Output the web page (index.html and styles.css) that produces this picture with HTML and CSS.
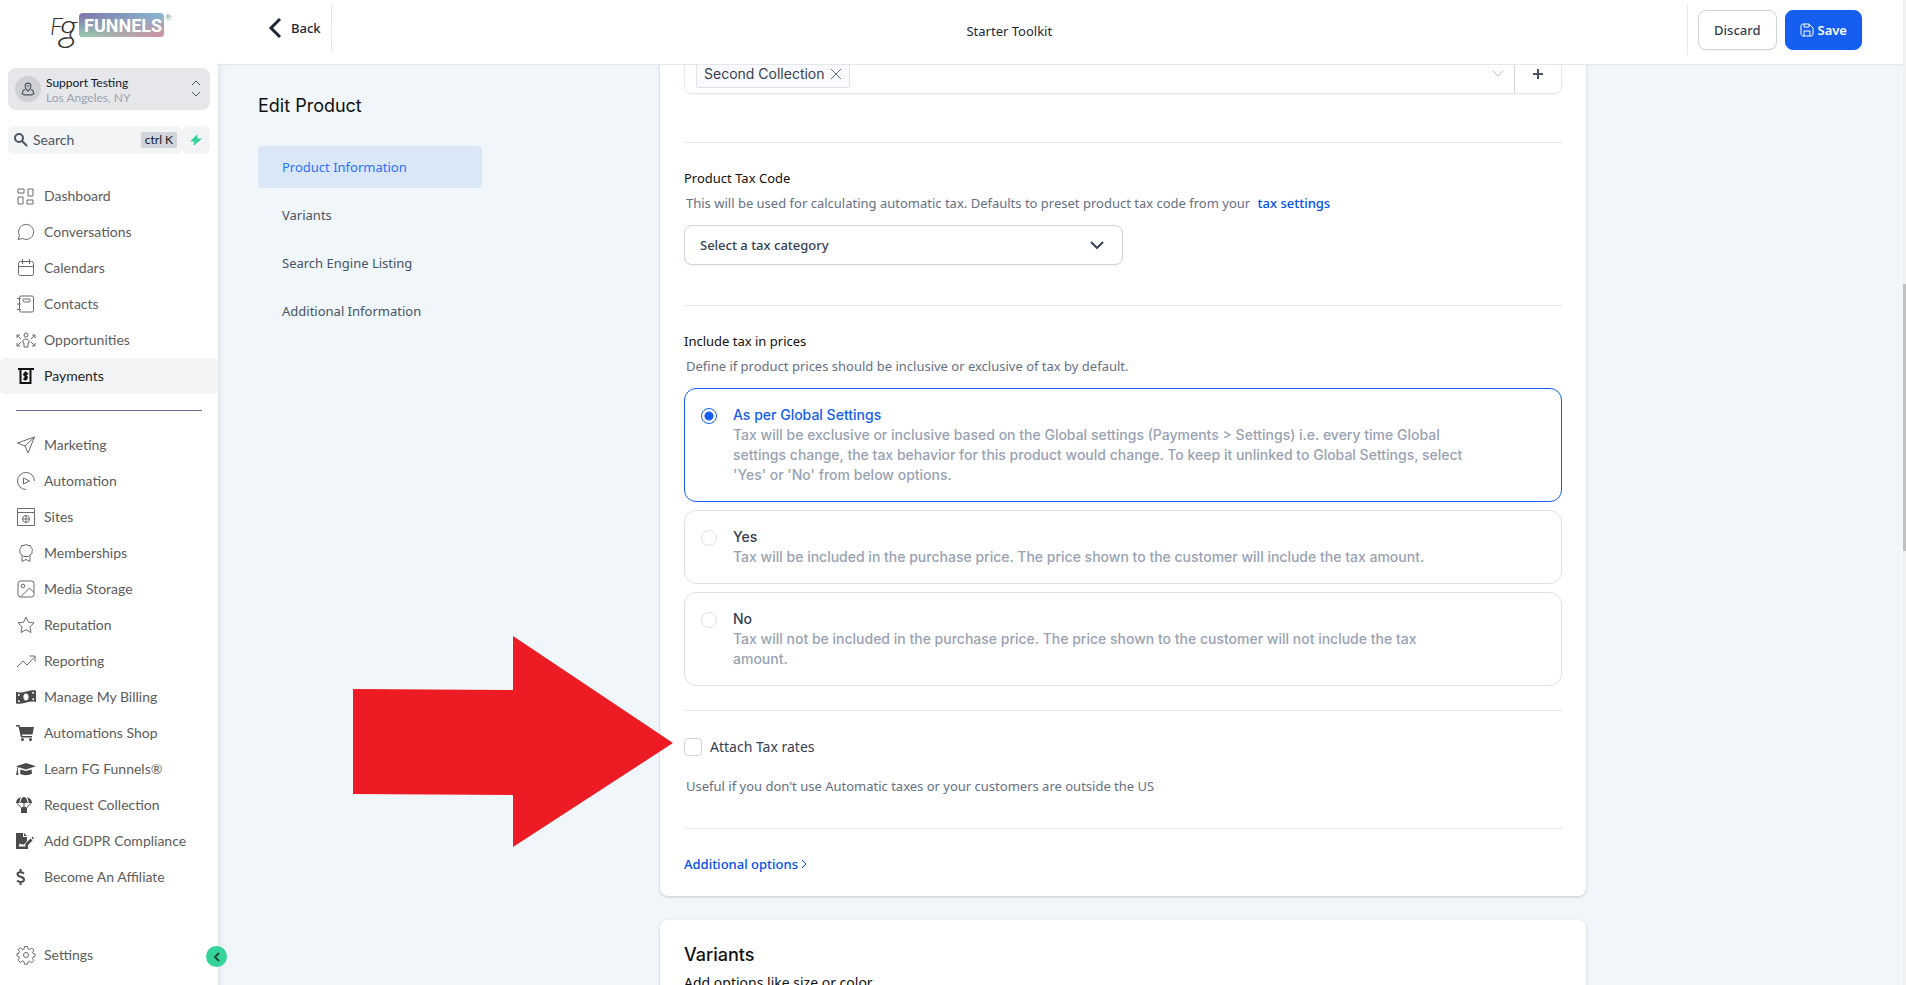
FILE: index.html
```html
<!DOCTYPE html>
<html lang="en">
<head>
    <meta charset="UTF-8">
    <meta name="viewport" content="width=device-width, initial-scale=1.0">
    <title>Starter Toolkit - Edit Product</title>
    <link rel="stylesheet" href="styles.css">
</head>
<body>
    <!-- Sidebar -->
    <aside class="sidebar">
        <a class="logo" href="#" aria-label="FG Funnels">
            <svg width="126" height="44" viewBox="0 0 126 44">
                <defs>
                    <linearGradient id="logoTop" x1="0" y1="0" x2="1" y2="0">
                        <stop offset="0" stop-color="#7f76ad"/>
                        <stop offset="1" stop-color="#86b9d0"/>
                    </linearGradient>
                    <linearGradient id="logoBottom" x1="0" y1="0" x2="1" y2="0">
                        <stop offset="0" stop-color="#93cfae"/>
                        <stop offset="1" stop-color="#d58c9f"/>
                    </linearGradient>
                    <linearGradient id="logoFade" x1="0" y1="0" x2="0" y2="1">
                        <stop offset="0.1" stop-color="#000"/>
                        <stop offset="1" stop-color="#fff"/>
                    </linearGradient>
                    <mask id="logoMask"><rect x="31" y="3" width="85" height="24" fill="url(#logoFade)"/></mask>
                </defs>
                <rect x="31" y="3" width="85" height="24" rx="4" fill="url(#logoTop)"/>
                <rect x="31" y="3" width="85" height="24" rx="4" fill="url(#logoBottom)" mask="url(#logoMask)"/>
                <text class="logo-script" x="2" y="25" font-size="24">F</text>
                <text class="logo-script" x="11" y="31" font-size="40">g</text>
                <text class="logo-word" x="36" y="22">FUNNELS</text>
                <text class="logo-mark" x="117" y="10">®</text>
            </svg>
        </a>

        <button class="location" type="button">
            <span class="location-avatar">
                <svg class="icon" width="14" height="14" viewBox="0 0 24 24"><path stroke-width="2" d="M12 16s-5-4.500-5-9a5 5 0 0 1 10 0c0 4.500-5 9-5 9z"/><circle cx="12" cy="7" r="1.500"/><path stroke-width="2" d="M7 13l-3 1-2 6 4 2h12l4-2-2-6-3-1"/></svg>
            </span>
            <span class="location-text">
                <span class="location-name">Support Testing</span>
                <span class="location-city">Los Angeles, NY</span>
            </span>
            <svg class="icon" width="10" height="18" viewBox="0 0 10 18"><path d="M1 5l4-4 4 4M1 12l4 4 4-4"/></svg>
        </button>

        <div class="search-row">
            <label class="search">
                <svg class="icon search-icon" width="14" height="14" viewBox="0 0 14 14"><circle cx="5" cy="5" r="4"/><path d="M8 8l5 5"/></svg>
                <input type="text" placeholder="Search" aria-label="Search">
                <kbd>ctrl K</kbd>
            </label>
            <button class="bolt" type="button" aria-label="Quick actions">
                <svg width="12" height="12" viewBox="0 0 12 12"><path fill="#34d399" stroke="#34d399" stroke-linejoin="round" d="M7 1L1 7h4l-1 4 7-6H7z"/></svg>
            </button>
        </div>

        <nav class="menu">
            <a href="#"><svg class="icon" width="20" height="20" viewBox="0 0 20 20"><path d="M2 3h6v4H2zM12 3h5v7h-5zM2 11h5v7H2zM11 14h6v4h-6z"/></svg>Dashboard</a>
            <a href="#"><svg class="icon" width="20" height="20" viewBox="0 0 20 20"><path d="M2 17.500l1.500-4a7.500 7.500 0 1 1 3 3z"/></svg>Conversations</a>
            <a href="#"><svg class="icon" width="20" height="20" viewBox="0 0 20 20"><rect x="2.500" y="3.500" width="15" height="14" rx="2"/><path d="M2.500 8.500h15M6.500 1v5M13.500 1v5"/></svg>Calendars</a>
            <a href="#"><svg class="icon" width="20" height="20" viewBox="0 0 20 20"><rect x="3.500" y="2" width="14" height="16" rx="1.500"/><rect x="7" y="5" width="7" height="3" rx="1"/><path d="M1 4.500h4M1 10h4M1 15.500h4"/></svg>Contacts</a>
            <a href="#"><svg class="icon" width="20" height="20" viewBox="0 0 20 20"><circle cx="10" cy="5" r="2"/><path d="M10 9c-2 0-3 1-3 2v2h1v4h4v-4h1v-2c0-1-1-2-3-2zM1 8V5h3M1 5l4 4M19 8V5h-3M19 5l-4 4M1 13v3h3M1 16l4-4M19 13v3h-3M19 16l-4-4"/></svg>Opportunities</a>
            <a class="active" href="#"><svg class="icon" width="20" height="20" viewBox="0 0 20 20"><path stroke-width="2" d="M2 3h16M4.500 3v14h10V3"/><path stroke-width="2" d="M12 8C8 6 7 9 9.500 10S11 14 7.500 12.500M9.500 5.500v9"/></svg>Payments</a>
        </nav>

        <hr class="menu-divider">

        <nav class="menu">
            <a href="#"><svg class="icon" width="20" height="20" viewBox="0 0 20 20"><path d="M1.500 8L18.500 2 12 18l-3-7zM9 11l9.500-9"/></svg>Marketing</a>
            <a href="#"><svg class="icon" width="20" height="20" viewBox="0 0 20 20"><path d="M10 18.500A8.500 8.500 0 1 1 18.500 10M7.500 7v6l6-3z"/></svg>Automation</a>
            <a href="#"><svg class="icon" width="20" height="20" viewBox="0 0 20 20"><path d="M1.500 1.500h17v17h-17zM1.500 5.500h17"/><circle cx="10" cy="12" r="3.500"/><path d="M10 8.500v7M6.500 12h7"/></svg>Sites</a>
            <a href="#"><svg class="icon" width="20" height="20" viewBox="0 0 20 20"><path d="M10 1.500l2 1 2.500 0 .5 2 1.500 2-.5 2 0 2-2 1.500-1.500 1.500h-5L6 12l-2-1.500v-2l-.5-2L5 4.500l.5-2H8zM6 12.500v6l4-2 4 2v-6"/></svg>Memberships</a>
            <a href="#"><svg class="icon" width="20" height="20" viewBox="0 0 20 20"><rect x="2" y="2" width="16" height="16" rx="2.500"/><circle cx="7" cy="7" r="1.800"/><path d="M4.500 18l9-9 4.500 4.500"/></svg>Media Storage</a>
            <a href="#"><svg class="icon" width="20" height="20" viewBox="0 0 20 20"><path d="M10 2l2.400 5.200 5.600.7-4.100 3.900 1.100 5.700-5-2.800-5 2.800 1.100-5.700L2 7.900l5.600-.7z"/></svg>Reputation</a>
            <a href="#"><svg class="icon" width="20" height="20" viewBox="0 0 20 20"><path d="M1 16l6-6 4 4 8-8.500M13.500 5H19v5.500"/></svg>Reporting</a>
            <a href="#"><svg class="solid" width="20" height="20" viewBox="0 0 20 20"><path fill-rule="evenodd" d="M0 5c7 2 13-3 20-1.500V15c-7-2-13 3-20 1.500zM10 6.500c-1.500 0-2.600 1.500-2.600 3.500s1.100 3.500 2.600 3.500 2.600-1.500 2.600-3.500-1.100-3.500-2.600-3.500zM2 7v2c1 0 2-.8 2-1.800zM2 13v2l2 .1C4 14 3 13 2 13zM18 5v2c-1 0-2-.8-2-2zM18 11v2l-2-.2c0-1 1-1.800 2-1.800z"/></svg>Manage My Billing</a>
            <a href="#"><svg class="solid" width="20" height="20" viewBox="0 0 20 20"><path d="M0 2h3.500l.5 2h14l-1.500 7.500H6l.4 1.500H16v1.500H5L2.500 3.500H0z"/><circle cx="6.500" cy="16.500" r="1.500"/><circle cx="14.500" cy="16.500" r="1.500"/></svg>Automations Shop</a>
            <a href="#"><svg class="solid" width="20" height="20" viewBox="0 0 20 20"><path d="M10 4l10 3.300-10 3.300-7.500-2.400C1.800 9 1.800 10 1.800 11l.7 5H0l1-5c0-1 0-2 .8-3L0 7.300zM4.500 10.500L10 12l5.500-1.500.5 4c-3 2.300-9 2.300-12 0z"/></svg>Learn FG Funnels®</a>
            <a href="#"><svg class="solid" width="20" height="20" viewBox="0 0 20 20"><path d="M0 8C0 5 2 3 5 2.200 4 4 3.500 6 3.500 8zM16 8c0-3-2-5-5-5.800C12 4 12.500 6 12.500 8zM4.500 8C4.500 5 6 2 8 2s3.500 3 3.500 6zM5 12h6v6H5zM.5 8l4.500 5h1L1.500 8zM14.500 8L10 13h1l4.500-5zM7.500 8h1v4h-1z"/></svg>Request Collection</a>
            <a href="#"><svg class="solid" width="20" height="20" viewBox="0 0 20 20"><path fill-rule="evenodd" d="M0 2h7v4h4v4l-3.500 4c-1-1.500-2-1.500-2.500 0l-1-2-1.500 3.500H9l3-1.500v4H0zM8 2l3 3H8zM9.500 12.500l5-5 2 2-5 5-2.500.5zM15.500 6.500l1-1 1.500 2-1 1z"/></svg>Add GDPR Compliance</a>
            <a href="#"><svg class="icon dollar" width="20" height="20" viewBox="0 0 20 20"><path stroke-width="2" d="M8 6.500C6 5 1.500 4.500 1.500 7.300S8 9.500 8 12.500s-4.500 3-7 1M4.500 2v2.500M4.500 15.500V18"/></svg>Become An Affiliate</a>
        </nav>

        <div class="sidebar-footer">
            <nav class="menu">
                <a href="#"><svg class="icon" width="20" height="20" viewBox="0 0 20 20"><circle cx="10" cy="10" r="2.500"/><path d="M8.500 1.500h3l.5 2.500 1.500.6L15.800 3 18 5.200l-1.500 2 .6 1.400 1.900.4v2.500l-2 .5-.6 1.500 1.400 2-2 2.300-2.300-1.500-1.500.6-.5 2.300h-3L8 16.500l-1.500-.6-2.300 1.400L2 15l1.500-2-.6-1.500L1 11V8.500L3 8l.6-1.500L2 4.500 4.300 2.800l2.200 1.800L8 4z"/></svg>Settings</a>
            </nav>
            <button class="collapse" type="button" aria-label="Collapse menu">
                <svg class="icon" width="8" height="12" viewBox="0 0 8 12"><path d="M6 2L2 6l4 4"/></svg>
            </button>
        </div>
    </aside>

    <div class="page">
        <!-- Top bar -->
        <header class="topbar">
            <a class="back" href="#">
                <svg class="icon" width="14" height="22" viewBox="0 0 14 22"><path d="M12 2L3 11l9 9"/></svg>
                Back
            </a>
            <h1>Starter Toolkit</h1>
            <div class="actions">
                <button class="btn" type="button">Discard</button>
                <button class="btn btn-primary" type="button">
                    <svg class="icon" width="14" height="14" viewBox="0 0 14 14"><path d="M1 3c0-1 1-2 2-2h6l4 4v6c0 1-1 2-2 2H3c-1 0-2-1-2-2zM4 1v3h5V1M4 13V8h6v5"/></svg>
                    Save
                </button>
            </div>
        </header>

        <main class="content">
            <nav class="sections">
                <h2>Edit Product</h2>
                <a class="active" href="#product">Product Information</a>
                <a href="#variants">Variants</a>
                <a href="#">Search Engine Listing</a>
                <a href="#">Additional Information</a>
            </nav>

            <div class="cards">
                <section class="card card-product" id="product">
                    <div class="collections">
                        <div class="collections-box">
                            <span class="tag">Second Collection
                                <button type="button" aria-label="Remove Second Collection"><svg class="icon" width="10" height="10" viewBox="0 0 10 10"><path d="M0 0l10 10M10 0L0 10"/></svg></button>
                            </span>
                            <svg class="icon collections-arrow" width="10" height="6" viewBox="0 0 10 6"><path d="M0 0l5 5 5-5"/></svg>
                        </div>
                        <button class="collections-add" type="button" aria-label="Add collection">
                            <svg class="icon" width="12" height="12" viewBox="0 0 12 12"><path d="M6 1v10M1 6h10"/></svg>
                        </button>
                    </div>

                    <div class="block tax-code">
                        <label class="field-label" for="taxCategory">Product Tax Code</label>
                        <p class="hint">This will be used for calculating automatic tax. Defaults to preset product tax code from your <a href="#">tax settings</a></p>
                        <div class="select-wrap">
                            <select id="taxCategory">
                                <option>Select a tax category</option>
                            </select>
                            <svg class="icon" width="14" height="8" viewBox="0 0 14 8"><path d="M1 1l6 6 6-6"/></svg>
                        </div>
                    </div>

                    <fieldset class="block tax-include">
                        <legend class="field-label">Include tax in prices</legend>
                        <p class="hint">Define if product prices should be inclusive or exclusive of tax by default.</p>
                        <label class="option">
                            <input type="radio" name="taxInclude" checked>
                            <span class="option-text">
                                <span class="option-title">As per Global Settings</span>
                                <span>Tax will be exclusive or inclusive based on the Global settings (Payments &gt; Settings) i.e. every time Global settings change, the tax behavior for this product would change. To keep it unlinked to Global Settings, select 'Yes' or 'No' from below options.</span>
                            </span>
                        </label>
                        <label class="option">
                            <input type="radio" name="taxInclude">
                            <span class="option-text">
                                <span class="option-title">Yes</span>
                                <span>Tax will be included in the purchase price. The price shown to the customer will include the tax amount.</span>
                            </span>
                        </label>
                        <label class="option">
                            <input type="radio" name="taxInclude">
                            <span class="option-text">
                                <span class="option-title">No</span>
                                <span>Tax will not be included in the purchase price. The price shown to the customer will not include the tax amount.</span>
                            </span>
                        </label>
                    </fieldset>

                    <div class="block tax-rates">
                        <svg class="pointer" width="320" height="212" viewBox="0 0 320 212"><path fill="#ed1c24" d="M0 53l160 1V0l160 107-160 104v-52L0 158z"/></svg>
                        <label class="check">
                            <input type="checkbox">
                            Attach Tax rates
                        </label>
                        <p class="hint">Useful if you don't use Automatic taxes or your customers are outside the US</p>
                    </div>

                    <div class="block more">
                        <a href="#">Additional options <svg class="icon" width="6" height="10" viewBox="0 0 6 10"><path d="M1 1l4 4-4 4"/></svg></a>
                    </div>
                </section>

                <section class="card card-variants" id="variants">
                    <h2>Variants</h2>
                    <p>Add options like size or color</p>
                </section>
            </div>
        </main>
    </div>
    <div class="scrollbar"><div class="scrollbar-thumb"></div></div>
</body>
</html>
```

FILE: styles.css
```css
:root {
    --primary: #155eef;
    --link: #004eeb;
    --line: #e4e7ec;
    --border: #d0d5dd;
    --text: #344054;
    --muted: #667085;
    --background: #f0f6f9;
    --ui-font: "Segoe UI", "Noto Sans", sans-serif;
    --inter: Inter, sans-serif;
}

* {
    box-sizing: border-box;
    margin: 0;
    padding: 0;
}

body {
    display: flex;
    height: 100vh;
    overflow: hidden;
    background: var(--background);
    color: var(--text);
    font-family: var(--ui-font);
    font-size: 13px;
    line-height: 20px;
}

a {
    color: inherit;
    text-decoration: none;
}

button,
input,
select {
    font: inherit;
    color: inherit;
}

button {
    cursor: pointer;
}

svg {
    flex-shrink: 0;
}

.icon {
    fill: none;
    stroke: currentColor;
}

/* Sidebar */
.sidebar {
    display: flex;
    flex-direction: column;
    width: 218px;
    flex-shrink: 0;
    background: white;
    font-family: Lato, sans-serif;
    font-size: 14px;
    box-shadow: 0 64px 8px rgba(16, 24, 40, 0.12);
    z-index: 3;
}

.logo {
    height: 68px;
    padding: 10px 0 0 48px;
}

.logo svg {
    overflow: visible;
}

.logo-script {
    font-family: Lato, sans-serif;
    font-weight: 300;
    font-style: italic;
    fill: #333;
}

.logo-word {
    font-family: Roboto, sans-serif;
    font-size: 18px;
    font-weight: 700;
    fill: white;
}

.logo-mark {
    font-family: Lato, sans-serif;
    font-size: 8px;
    fill: #5a9ab5;
}

.location {
    display: flex;
    align-items: center;
    gap: 5px;
    height: 42px;
    margin: 0 8px;
    padding: 0 9px 0 7px;
    border: none;
    border-radius: 8px;
    background: #e5e7eb;
    text-align: left;
    color: #4b5563;
}

.location-avatar {
    display: flex;
    align-items: center;
    justify-content: center;
    width: 26px;
    height: 26px;
    border-radius: 50%;
    background: #d0d1d4;
}

.location-text {
    display: flex;
    flex-direction: column;
    flex: 1;
    padding-top: 2px;
    font-size: 12px;
    line-height: 15px;
}

.location-name {
    color: #111827;
}

.location-city {
    color: #9ca3af;
}

.search-row {
    display: flex;
    margin: 16px 8px 24px;
    height: 28px;
}

.search {
    display: flex;
    align-items: center;
    flex: 1;
    min-width: 0;
    gap: 5px;
    padding: 0 5px 0 6px;
    border-radius: 6px;
    background: #f3f4f6;
}

.search-icon {
    stroke: #4b5563;
    stroke-width: 2;
}

.search input {
    flex: 1;
    min-width: 0;
    border: none;
    outline: none;
    background: none;
}

.search input::placeholder {
    color: #4b5563;
}

kbd {
    padding: 0 4px;
    border-radius: 2px;
    background: #d1d5db;
    color: #111827;
    font-family: inherit;
    font-size: 12px;
    line-height: 16px;
    white-space: nowrap;
}

.bolt {
    display: flex;
    align-items: center;
    justify-content: center;
    width: 28px;
    border: none;
    border-radius: 6px;
    background: #f3f4f6;
}

.menu a {
    display: flex;
    align-items: center;
    gap: 8px;
    height: 36px;
    padding: 0 16px;
    border-radius: 6px;
    color: #5c5c5c;
}

.menu .icon {
    stroke: #6b6b6b;
}

.menu .solid {
    fill: #4a4a4a;
}

.menu .dollar {
    stroke: #4a4a4a;
}

.menu .active {
    background: #f2f3f5;
    color: #222;
}

.menu .active .icon {
    stroke: #111;
}

.menu-divider {
    margin: 16px;
    border: none;
    border-top: 1px solid #64708a;
}

.sidebar-footer {
    position: relative;
    margin-top: auto;
    padding-bottom: 12px;
}

.collapse {
    position: absolute;
    right: -9px;
    top: 9px;
    display: flex;
    align-items: center;
    justify-content: center;
    width: 21px;
    height: 21px;
    border: none;
    border-radius: 50%;
    background: #34d399;
    color: #1f4b3c;
}

.collapse .icon {
    stroke-width: 2;
}

/* Top bar */
.page {
    display: flex;
    flex-direction: column;
    flex: 1;
    min-width: 0;
}

.topbar {
    display: flex;
    align-items: center;
    justify-content: space-between;
    flex-shrink: 0;
    height: 65px;
    padding: 0 41px 2px 50px;
    background: white;
    border-bottom: 1px solid var(--line);
    z-index: 2;
}

.back {
    display: flex;
    align-items: center;
    gap: 9px;
    height: 48px;
    margin-bottom: 6px;
    padding-right: 10px;
    border-right: 1px solid var(--line);
    color: #1d2939;
    font-weight: 500;
}

.back .icon {
    stroke-width: 3;
}

.topbar h1 {
    color: #1d2939;
    font-size: 13px;
    font-weight: 400;
}

.actions {
    display: flex;
    align-items: center;
    gap: 8px;
    height: 50px;
    margin-bottom: 2px;
    padding-left: 10px;
    border-left: 1px solid var(--line);
}

.btn {
    display: flex;
    align-items: center;
    gap: 4px;
    height: 40px;
    padding: 0 15px;
    border: 1px solid var(--border);
    border-radius: 8px;
    background: white;
    font-weight: 500;
    box-shadow: 0 1px 2px rgba(16, 24, 40, 0.05);
}

.btn-primary {
    padding: 0 14px;
    border-color: var(--primary);
    background: var(--primary);
    color: white;
    font-weight: 600;
}

/* Content */
.content {
    display: grid;
    grid-template-columns: 402fr 926fr 317fr;
    flex: 1;
    min-height: 0;
    padding-left: 40px;
    overflow: hidden;
}

.sections {
    max-width: 224px;
    padding-top: 27px;
}

.sections h2,
.card-variants h2 {
    color: #101010;
    font-family: var(--inter);
    font-size: 18px;
    font-weight: 400;
    line-height: 28px;
}

.sections h2 {
    margin-bottom: 26px;
}

.sections a {
    display: block;
    margin-bottom: 6px;
    padding: 11px 24px;
    border-radius: 4px;
    color: #475467;
}

.sections .active {
    background: #dae7f8;
    color: #2970ff;
}

.card {
    padding: 0 24px;
    border-radius: 8px;
    background: white;
    box-shadow: 0 1px 3px rgba(16, 24, 40, 0.2);
}

/* the card is scrolled up under the top bar */
.card-product {
    margin-top: -11px;
}

.collections {
    display: flex;
    height: 40px;
    margin-bottom: 48px;
    border: 1px solid var(--line);
    border-radius: 8px;
    box-shadow: 0 1px 2px rgba(16, 24, 40, 0.05);
}

.collections-box {
    display: flex;
    align-items: center;
    justify-content: space-between;
    flex: 1;
    padding: 0 11px;
}

.tag {
    display: flex;
    align-items: center;
    gap: 6px;
    height: 28px;
    padding: 0 8px 0 7px;
    border: 1px solid #e0e0e6;
    border-radius: 2px;
    background: #fafafc;
    font-family: var(--inter);
    font-size: 14px;
}

.tag button {
    display: flex;
    border: none;
    background: none;
    color: #667085;
}

.collections-arrow {
    color: #c2c2c9;
}

.collections-add {
    display: flex;
    align-items: center;
    justify-content: center;
    width: 47px;
    border: none;
    border-left: 1px solid var(--border);
    background: none;
}

.collections-add .icon {
    stroke: #475467;
    stroke-width: 2;
}

.block {
    border: none;
    border-top: 1px solid var(--line);
}

.field-label {
    display: block;
    color: #101010;
}

.hint {
    padding-left: 2px;
    color: var(--muted);
}

.hint a,
.more a {
    color: var(--link);
    font-weight: 500;
}

.hint a {
    margin-left: 4px;
}

.tax-code {
    padding: 25px 0 40px;
}

.tax-code .hint {
    margin: 5px 0 12px;
}

.select-wrap {
    display: grid;
    align-items: center;
    width: 50%;
}

.select-wrap select,
.select-wrap .icon {
    grid-area: 1 / 1;
}

.select-wrap select {
    appearance: none;
    height: 40px;
    padding: 0 15px;
    border: 1px solid var(--border);
    border-radius: 8px;
    background: white;
    font-weight: 500;
    box-shadow: 0 1px 2px rgba(16, 24, 40, 0.05);
}

.select-wrap .icon {
    justify-self: end;
    margin-right: 19px;
    stroke-width: 2;
    pointer-events: none;
}

.tax-include {
    padding-bottom: 24px;
}

.tax-include .field-label {
    float: left;
    width: 100%;
    margin-top: 25px;
}

.tax-include .hint {
    clear: both;
    padding-top: 5px;
    margin-bottom: 12px;
}

.option {
    display: flex;
    gap: 16px;
    margin-bottom: 8px;
    padding: 16px;
    border: 1px solid #e0e0e6;
    border-radius: 12px;
    color: #98a2b3;
    font-family: var(--inter);
    font-size: 14px;
    font-weight: 500;
}

.option:last-child {
    margin-bottom: 0;
}

.option:has(input:checked) {
    border-color: var(--primary);
}

.option input {
    appearance: none;
    flex-shrink: 0;
    width: 16px;
    height: 16px;
    margin-top: 3px;
    border: 1px solid #e0e0e6;
    border-radius: 50%;
}

.option input:checked {
    border-color: var(--primary);
    background: radial-gradient(circle, var(--primary) 4px, white 5px);
}

.option-text {
    display: flex;
    flex-direction: column;
    max-width: 732px;
}

.option-title {
    color: var(--text);
}

.option input:checked + .option-text .option-title {
    color: var(--primary);
}

.tax-rates {
    position: relative;
    padding: 24px 0 32px;
}

.pointer {
    position: absolute;
    right: 100%;
    top: -75px;
    margin-right: 11px;
}

.check {
    display: flex;
    align-items: center;
    gap: 8px;
    margin-bottom: 17px;
    font-size: 14px;
    line-height: 24px;
}

.check input {
    appearance: none;
    width: 18px;
    height: 18px;
    border: 1px solid var(--border);
    border-radius: 4px;
}

.more {
    padding: 25px 0 22px;
}

.card-variants {
    height: 120px;
    margin-top: 24px;
    padding-top: 21px;
}

.card-variants h2 {
    font-weight: 500;
}

.card-variants p {
    margin-top: 4px;
    color: #101010;
    font-size: 14px;
}

/* Scrollbar */
.scrollbar {
    width: 3px;
    padding-top: 284px;
    background: #f1f1f1;
    z-index: 3;
}

.scrollbar-thumb {
    height: 267px;
    background: #c1c1c1;
}
```
